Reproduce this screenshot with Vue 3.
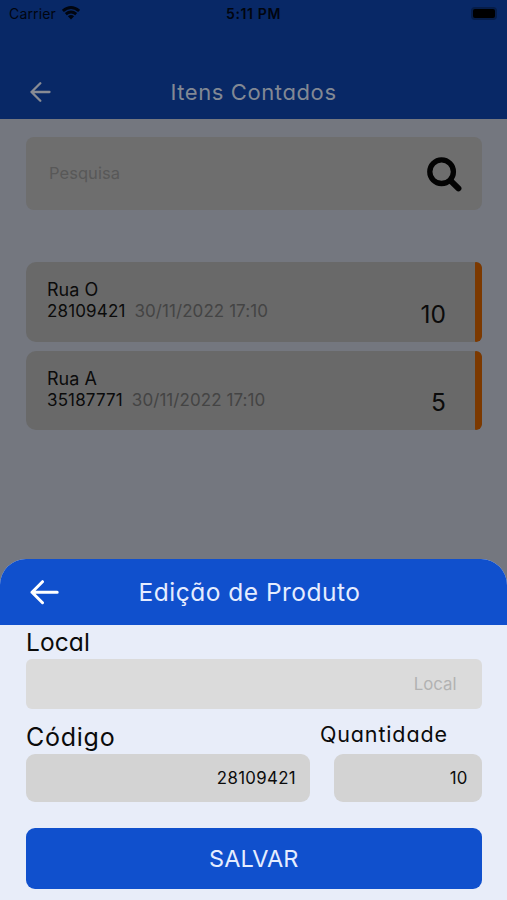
<script setup>
const items = [
  { street: 'Rua O', code: '28109421', date: '30/11/2022 17:10', amount: 10 },
  { street: 'Rua A', code: '35187771', date: '30/11/2022 17:10', amount: 5 },
]
</script>

<template>
  <div class="screen">
    <header class="top">
      <div class="status">
        <div class="carrier">
          <span>Carrier</span>
          <svg class="wifi" width="18" height="14" viewBox="0 0 18 14" fill="none" stroke="#01050f" stroke-width="2.9">
            <path d="M.9 5Q9-1.8 17.1 5M3.8 8.2Q9 4 14.2 8.2" />
            <path d="M5.9 10.3Q9 7.8 12.1 10.3L9 13.4Z" fill="#01050f" stroke="none" />
          </svg>
        </div>
        <span class="clock">5:11 PM</span>
        <div class="power"><span class="battery"></span></div>
      </div>
      <div class="bar">
        <svg class="back" width="21" height="20" viewBox="0 0 21 20" fill="none" stroke="#888b94" stroke-width="2.3" stroke-linecap="round" stroke-linejoin="round">
          <path d="M19.5 10H1.5M10.3 1.3L1.5 10L10.3 18.7" />
        </svg>
        <h1 class="geo">Itens Contados</h1>
      </div>
    </header>

    <main class="content">
      <div class="search">
        <span>Pesquisa</span>
        <svg width="36" height="36" viewBox="0 0 36 36" fill="none" stroke="#030303" stroke-width="5.3" stroke-linecap="round">
          <circle cx="15.6" cy="14.7" r="11.8" />
          <path d="M24.5 23.7L32.4 31.4" stroke-width="6" />
        </svg>
      </div>
      <ul class="list">
        <li v-for="item in items" :key="item.code" class="card">
          <div class="info">
            <p class="street">{{ item.street }}</p>
            <p class="detail"><span>{{ item.code }}</span><span class="date">{{ item.date }}</span></p>
          </div>
          <span class="amount">{{ item.amount }}</span>
        </li>
      </ul>
    </main>

    <section class="sheet">
      <div class="sheet-head">
        <svg width="29" height="25" viewBox="0 0 29 25" fill="none" stroke="#fff" stroke-width="3" stroke-linecap="round" stroke-linejoin="round">
          <path d="M27.2 12.2H2M12.5 1.7L2 12.2L12.5 22.7" />
        </svg>
        <h2 class="geo">Edição de Produto</h2>
      </div>
      <div class="form">
        <label class="geo local-label">Local</label>
        <div class="field local"><span>Local</span></div>
        <div class="row">
          <div class="code-col">
            <label class="geo code-label">Código</label>
            <div class="field"><span class="code-value">28109421</span></div>
          </div>
          <div class="qty-col">
            <label class="geo qty-label">Quantidade</label>
            <div class="field"><span>10</span></div>
          </div>
        </div>
        <button class="save"><span>SALVAR</span></button>
      </div>
    </section>
  </div>
</template>

<style>
body { margin: 0; background: #74777f; }
</style>

<style scoped>
.screen { width: 507px; height: 900px; overflow: hidden; display: flex; flex-direction: column; background: #74777f; font-family: Inter, "Liberation Sans", sans-serif; color: #0b0b0b; }
h1, h2, p, ul { margin: 0; padding: 0; font-weight: 400; white-space: nowrap; }
label, span { white-space: nowrap; }
.geo { font-feature-settings: "cv11" 1; }
.top { height: 119px; flex: none; background: #082866; }
.status { height: 27px; display: grid; grid-template-columns: 1fr auto 1fr; align-items: center; padding: 0 9px; color: #01050f; font-size: 14px; }
.carrier { display: flex; align-items: center; gap: 6px; letter-spacing: .15px; }
.wifi { margin-top: -2px; }
.clock { font-weight: 600; font-size: 14px; letter-spacing: .65px; }
.power { display: flex; justify-content: flex-end; padding-right: 3px; }
.battery { width: 22px; height: 9px; margin-top: -1px; border-radius: 2px; background: #000; box-shadow: 0 0 0 2px #061d49; }
.bar { display: grid; grid-template-columns: 60px 1fr 60px; align-items: center; height: 63px; margin-top: 33px; }
.back { margin-left: 30px; }
h1 { text-align: center; font-size: 22px; line-height: 30px; letter-spacing: .6px; color: #828894; }
.content { padding: 18px 25.5px 0 26px; }
.search { height: 73px; display: flex; align-items: center; justify-content: space-between; padding: 0 19.5px 2px 23px; box-sizing: border-box; border-radius: 8px; background: #6e6e6e; color: #585858; font-size: 16.5px; letter-spacing: .05px; }
.search svg { margin-top: 4px; }
.list { list-style: none; display: flex; flex-direction: column; gap: 9px; margin-top: 52px; }
.card { height: 79.5px; box-sizing: border-box; display: flex; justify-content: space-between; position: relative; overflow: hidden; border-radius: 10px 6px 6px 10px; background: #696969; padding: 17px 35.5px 0 21px; }
.card::after { content: ""; position: absolute; top: 0; right: 0; width: 7px; height: 100%; border-radius: 1px 5px 5px 1px; background: #7c3900; }
.street { font-size: 18px; line-height: 21px; }
.detail { display: flex; gap: 9px; font-size: 17px; line-height: 22px; letter-spacing: .14px; }
.date { color: #444; letter-spacing: .07px; }
.amount { font-size: 24.5px; line-height: 30px; margin-top: 19.5px; }
.sheet { margin-top: auto; height: 341px; flex: none; border-radius: 26px 26px 0 0; overflow: hidden; background: #e8edf9; }
.sheet-head { height: 66px; display: grid; grid-template-columns: 59px 1fr 67px; align-items: center; background: #1050cd; color: #e5edff; }
.sheet-head svg { margin-left: 30px; }
h2 { text-align: center; font-size: 24.5px; line-height: 32px; letter-spacing: .5px; padding-bottom: 1px; }
.form { padding: 0 25.5px 0 26px; display: flex; flex-direction: column; }
.local-label { font-size: 24.5px; line-height: 35px; height: 34px; letter-spacing: .1px; }
.field { height: 48px; display: flex; align-items: center; justify-content: flex-end; padding: 0 14px 0 15px; box-sizing: border-box; border-radius: 9px; background: #d3d3d3; font-size: 16.8px; letter-spacing: .15px; }
.local { height: 50px; padding-right: 25px; border-radius: 6px; background: #dbdbdb; color: #b2b2b2; letter-spacing: 0; }
.code-value { letter-spacing: .35px; }
.row { display: flex; justify-content: space-between; padding-top: 10px; }
.code-col { width: 284px; }
.qty-col { width: 147.5px; }
.code-label, .qty-label { display: block; height: 35px; line-height: 36px; font-size: 25px; letter-spacing: .75px; }
.qty-label { font-size: 21.5px; line-height: 31px; margin-left: -14px; letter-spacing: .85px; }
.save { height: 61px; margin-top: 26px; padding: 0; border: 0; border-radius: 9px; background: #1050cd; color: #e5edff; font: 400 23.5px/30px Inter, sans-serif; letter-spacing: .1px; }
</style>
